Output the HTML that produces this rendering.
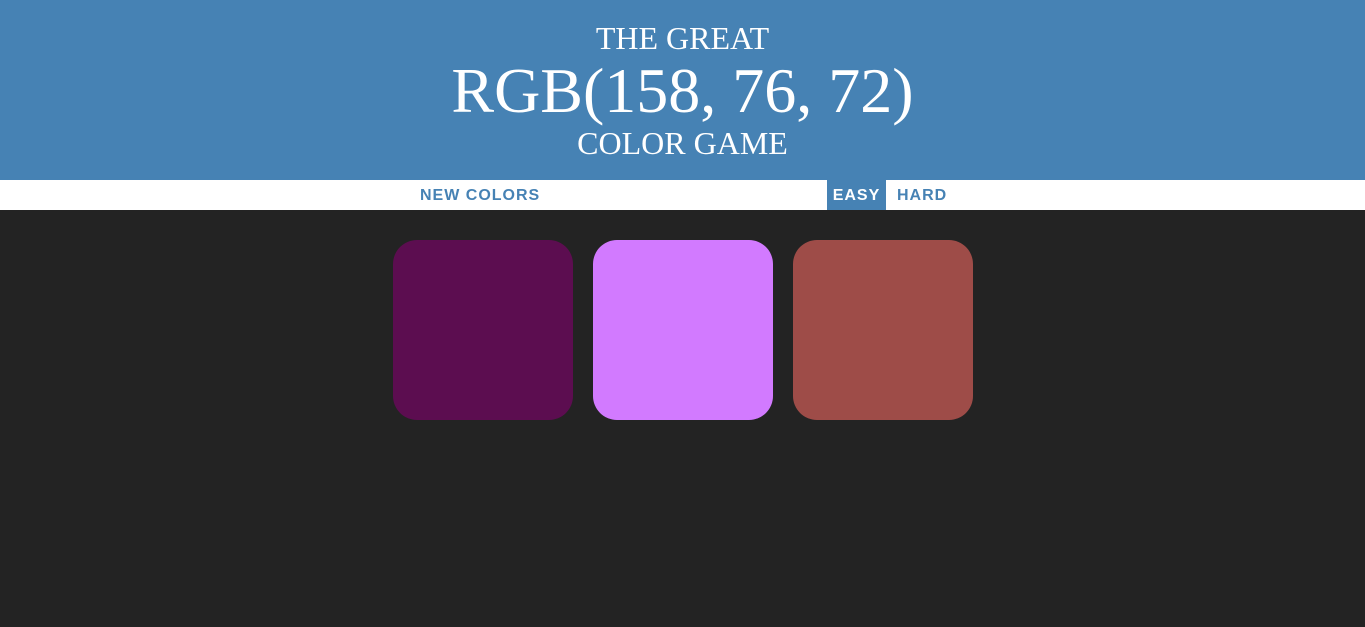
<!DOCTYPE html>
<html><head><meta charset="utf-8"><style>
html,body{margin:0;padding:0;width:1365px;height:627px;overflow:hidden;background:#232323;}
#h{position:absolute;left:0;top:0;width:1365px;height:180px;background:#4682b4;color:#fff;font-family:"Liberation Serif",serif;text-align:center;}
.t{position:absolute;left:0;width:100%;line-height:1;}
#bar{position:absolute;left:0;top:180px;width:1365px;height:30px;background:#fff;font-family:"Liberation Sans",sans-serif;font-weight:bold;font-size:16px;letter-spacing:1px;color:#4682b4;}
#bar span{position:absolute;top:0;height:30px;line-height:32px;}
.sq{position:absolute;top:240px;width:180px;height:180px;border-radius:24px;}
</style></head><body>
<div id="h">
<div class="t" style="top:22px;font-size:32px;">THE GREAT</div>
<div class="t" style="top:59px;font-size:64px;">RGB(158, 76, 72)</div>
<div class="t" style="top:127px;font-size:32px;">COLOR GAME</div>
</div>
<div id="bar">
<span style="left:420px;">NEW COLORS</span>
<span style="left:827px;width:59px;background:#4682b4;color:#fff;text-align:center;">EASY</span>
<span style="left:897px;">HARD</span>
</div>
<div class="sq" style="left:393px;background:#5c0d50;"></div>
<div class="sq" style="left:593px;background:#d27aff;"></div>
<div class="sq" style="left:793px;background:#9e4c48;"></div>
</body></html>
